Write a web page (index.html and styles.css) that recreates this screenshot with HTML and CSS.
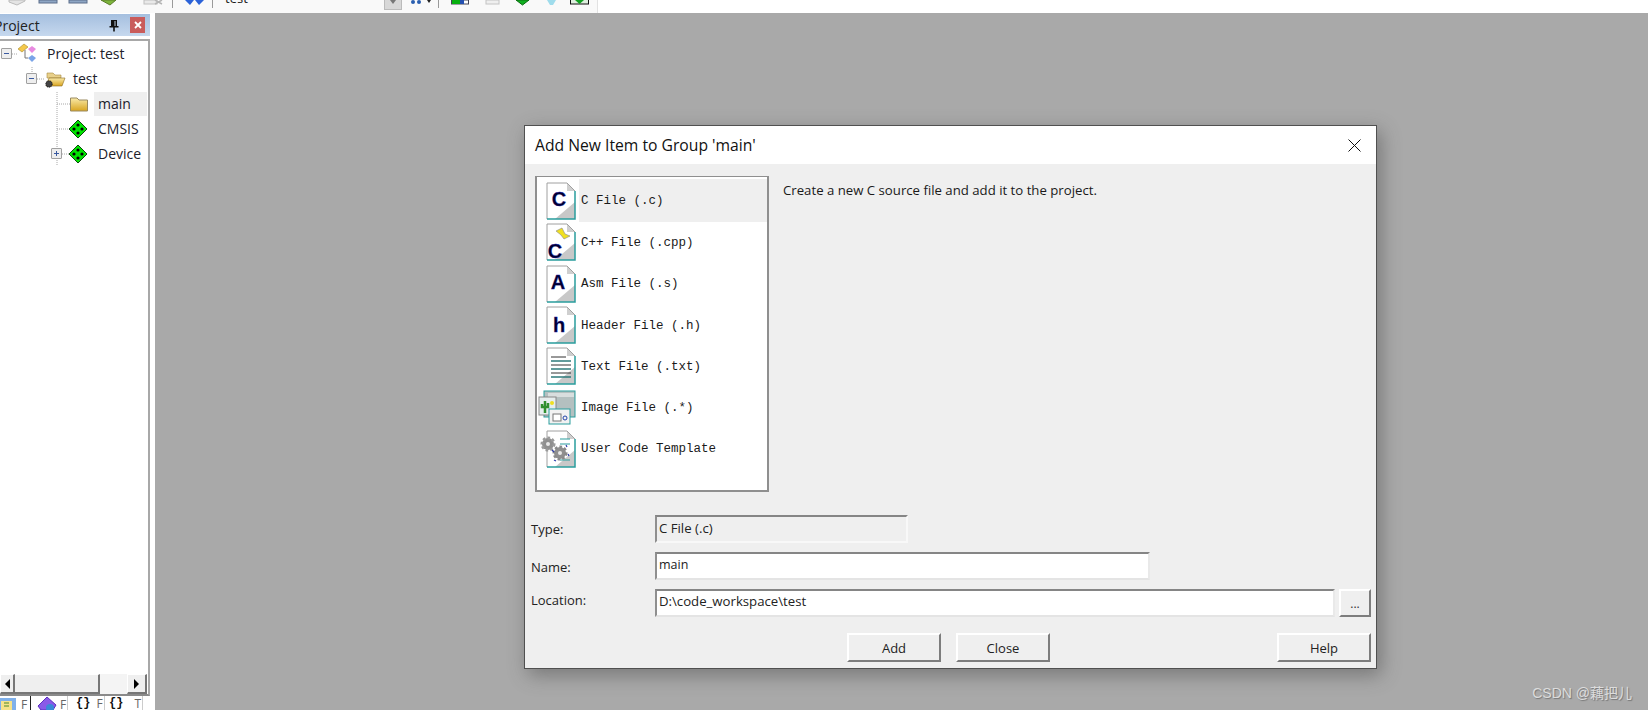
FILE: index.html
```html
<!DOCTYPE html>
<html lang="en">
<head>
<meta charset="utf-8">
<title>Add New Item to Group 'main'</title>
<link rel="stylesheet" href="styles.css">
</head>
<body>
<svg class="defs" width="0" height="0" aria-hidden="true">
  <defs>
    <linearGradient id="fold" x1="0" y1="0" x2="0" y2="1">
      <stop offset="0" stop-color="#f9e9a8"/><stop offset="1" stop-color="#d9a520"/>
    </linearGradient>
    <symbol id="doc" viewBox="0 0 30 38">
      <path d="M1 1H21L29 9V37H1Z" fill="#fff"/>
      <path d="M29 20V37H9Z" fill="#c8c8c8"/>
      <path d="M21 1V9H29Z" fill="#cfcfcf"/>
      <path d="M1 37V1H21L29 9" fill="none" stroke="#a0a0a0"/>
      <path d="M1 37H29V9" fill="none" stroke="#2a9d9d" stroke-width="1.5"/>
    </symbol>
    <symbol id="chip" viewBox="0 0 20 20">
      <path d="M10 1L19 10L10 19L1 10Z" fill="#00e400" stroke="#0a4a0a"/>
      <circle cx="10" cy="6" r="1.6" fill="#000"/><circle cx="10" cy="14" r="1.6" fill="#000"/>
      <circle cx="6" cy="10" r="1.6" fill="#000"/><circle cx="14" cy="10" r="1.6" fill="#000"/>
    </symbol>
  </defs>
</svg>

<header class="topbar">
  <div class="tools">
    <svg class="tool-a" width="172" height="13" viewBox="0 0 172 13">
      <path d="M9 2L17 5L25 1V0H9Z" fill="#e4e4e4" stroke="#bbb"/>
      <rect x="39" y="0" width="18" height="3" fill="#8ea6c4" stroke="#5d6f8c"/>
      <rect x="69" y="0" width="18" height="3" fill="#8ea6c4" stroke="#5d6f8c"/>
      <path d="M101 0H116L110 5Z" fill="#7db53c" stroke="#5a7d2a"/>
      <rect x="144" y="0" width="13" height="4" fill="#e9e9e9" stroke="#c0c0c0"/>
      <path d="M155 0L162 4M162 0L155 4" stroke="#b5b5b5" stroke-width="1.5"/>
    </svg>
    <span class="tsep"></span>
    <svg class="tool-b" width="20" height="13" viewBox="0 0 20 13">
      <path d="M0 0H9L5 5ZM10 0H19L14 5Z" fill="#2b62d8"/>
    </svg>
    <span class="tsep tsep-b"></span>
    <span class="combo">test</span>
    <span class="drop"></span>
    <svg class="tool-c" width="21" height="13" viewBox="0 0 21 13">
      <circle cx="3" cy="2" r="2" fill="#2a5fb0"/><circle cx="9" cy="2" r="2" fill="#2a5fb0"/>
      <path d="M17 0H21L19 3Z" fill="#222"/>
    </svg>
    <span class="tsep tsep-c"></span>
    <svg class="tool-d" width="139" height="13" viewBox="0 0 139 13">
      <rect x="0.5" y="0" width="17" height="4" fill="#fff" stroke="#445"/>
      <rect x="1" y="0" width="8" height="4" fill="#08b010"/><rect x="9" y="0" width="4" height="4" fill="#2450b0"/>
      <rect x="35" y="0" width="13" height="4" fill="#efefef" stroke="#c4c4c4"/>
      <path d="M65 0H78L71.500 5Z" fill="#10b020" stroke="#0a6a10"/>
      <path d="M96 0H105L102 5H99Z" fill="#9fdcec"/>
      <rect x="119.500" y="-1" width="18" height="5" fill="#dff0df" stroke="#111"/>
      <path d="M124 0H133L128.500 4Z" fill="#10a020"/>
    </svg>
  </div>
</header>

<div class="main">
  <aside class="panel">
    <div class="panel-head">
      <span class="panel-title">Project</span>
      <svg class="pin" width="10" height="13" viewBox="0 0 10 13">
        <path d="M2 1H8V7H9.500V8.500H5.800V12.500H4.200V8.500H.5V7H2Z" fill="#111"/>
        <rect x="5.500" y="2" width="1" height="5" fill="#bcd"/>
      </svg>
      <span class="panel-close">
        <svg width="8" height="8" viewBox="0 0 8 8"><path d="M1 1L7 7M7 1L1 7" stroke="#fff" stroke-width="1.800"/></svg>
      </span>
    </div>
    <div class="tree-frame">
      <div class="tree">
        <svg class="tree-lines" width="100" height="140" viewBox="0 0 100 140">
          <path d="M12 13H18M32 26V34M37 38H44M57 51V125M57 63H70M57 88H70M62 113H70" stroke="#a8a8a8" stroke-dasharray="1 1" fill="none"/>
        </svg>
        <div class="row r0">
          <span class="exp"><i></i></span>
          <svg class="ti" width="21" height="21" viewBox="0 0 21 21">
            <path d="M1 6L7 1L11 4L5 9Z" fill="#f4c84a" stroke="#a88a2a" stroke-width=".6"/>
            <path d="M15 3L19 6L15 10L11 6Z" fill="#e88ae0"/>
            <path d="M15 12L19 15L15 19L11 15Z" fill="#7aa4e8"/>
            <path d="M8 7V15H11" fill="none" stroke="#777"/>
          </svg>
          <span class="lbl">Project: test</span>
        </div>
        <div class="row r1">
          <span class="exp"><i></i></span>
          <svg class="ti" width="22" height="20" viewBox="0 0 22 20">
            <path d="M3 4H9L11 6H17V9H3Z" fill="#e8d08a" stroke="#a88a40" stroke-width=".6"/>
            <path d="M2 17L5 9H21L18 17Z" fill="url(#fold)" stroke="#8a6a20" stroke-width=".6"/>
            <circle cx="5" cy="15" r="3.200" fill="#444" stroke="#111" stroke-dasharray="1 1"/>
          </svg>
          <span class="lbl">test</span>
        </div>
        <div class="row r2">
          <svg class="ti" width="18" height="16" viewBox="0 0 18 16">
            <path d="M0.500 2H7L9 4H17.500V15H0.500Z" fill="url(#fold)" stroke="#9a8a60"/>
          </svg>
          <span class="lbl sel">main</span>
        </div>
        <div class="row r3">
          <svg class="ti" width="20" height="20"><use href="#chip"/></svg>
          <span class="lbl">CMSIS</span>
        </div>
        <div class="row r4">
          <span class="exp plus"><i></i></span>
          <svg class="ti" width="20" height="20"><use href="#chip"/></svg>
          <span class="lbl">Device</span>
        </div>
      </div>
      <div class="hscroll">
        <span class="sb-btn sb-left"><b class="arr-l"></b></span>
        <span class="sb-thumb"></span>
        <span class="sb-track"></span>
        <span class="sb-btn sb-right"><b class="arr-r"></b></span>
      </div>
    </div>
    <nav class="tabs">
      <span class="tab t-files">
        <svg width="20" height="14" viewBox="0 0 20 14"><rect x="0" y="1" width="16" height="13" fill="#7fb0ea"/><rect x="1" y="4" width="11" height="10" fill="#f5e28a"/><path d="M4 6H9M4 9H9" stroke="#4a8a2a"/></svg>
        <em>F</em>
      </span>
      <span class="tab t-active">
        <svg width="21" height="14" viewBox="0 0 21 14"><path d="M2 10L11 1L20 9L17 14H5Z" fill="#8a5ae8" stroke="#5a2ec0"/><circle cx="14" cy="12" r="4" fill="#3a8ad8"/></svg>
        <em>F</em>
      </span>
      <span class="tab t-b"><strong>{}</strong><em>F</em></span>
      <span class="tab t-c"><strong>{}</strong><em>T</em></span>
    </nav>
  </aside>

  <main class="workspace">
    <section class="dialog">
      <div class="dlg-title">
        <h1>Add New Item to Group 'main'</h1>
        <svg class="dlg-x" width="13" height="13" viewBox="0 0 13 13"><path d="M.5 .5L12.500 12.500M12.500 .5L.5 12.500" stroke="#111" fill="none"/></svg>
      </div>
      <div class="dlg-body">
        <div class="top-row">
          <ul class="file-list">
            <li class="item current">
              <svg class="fi" width="30" height="38"><use href="#doc"/><text x="13" y="24" class="ltr">C</text></svg>
              <span>C File (.c)</span>
            </li>
            <li class="item">
              <svg class="fi" width="30" height="38"><use href="#doc"/>
                <path d="M10 8L16 5L19 11L24 13L18 16L15 12Z" fill="#f0e020" stroke="#888" stroke-width=".6"/>
                <text x="9" y="35" class="ltr">C</text></svg>
              <span>C++ File (.cpp)</span>
            </li>
            <li class="item">
              <svg class="fi" width="30" height="38"><use href="#doc"/><text x="12" y="24" class="ltr">A</text></svg>
              <span>Asm File (.s)</span>
            </li>
            <li class="item">
              <svg class="fi" width="30" height="38"><use href="#doc"/><text x="13" y="26" class="ltr">h</text></svg>
              <span>Header File (.h)</span>
            </li>
            <li class="item">
              <svg class="fi" width="30" height="38"><use href="#doc"/>
                <path d="M5 10H20M5 14H25M5 18H25M5 22H25M5 26H25M5 30H25" stroke="#333" stroke-width="1"/>
                <path d="M5 14H25M5 22H25M5 30H25" stroke="#2a9d9d" stroke-width="1"/>
              </svg>
              <span>Text File (.txt)</span>
            </li>
            <li class="item">
              <svg class="fi fi-wide" width="38" height="36" viewBox="0 0 38 36">
                <rect x="6" y="1" width="31" height="26" fill="#b4c0c0" stroke="#2a9d9d"/>
                <rect x="10" y="3" width="26" height="4" fill="#d8dede"/>
                <rect x="1" y="7" width="17" height="18" fill="#e6eeee" stroke="#888"/>
                <path d="M7 11V23M4 14V17H10V13" stroke="#2f8f2f" stroke-width="2.500" fill="none"/>
                <circle cx="14" cy="13" r="2" fill="#f0e020"/>
                <rect x="11" y="19" width="21" height="15" fill="#f2f2f2" stroke="#2a9d9d"/>
                <rect x="15" y="24" width="8" height="7" fill="#fff" stroke="#777"/>
                <circle cx="27" cy="28" r="2" fill="none" stroke="#2244aa"/>
              </svg>
              <span>Image File (.*)</span>
            </li>
            <li class="item">
              <svg class="fi" width="38" height="38" viewBox="0 0 38 38">
                <g transform="translate(8 0)"><use href="#doc" width="30" height="38"/>
                <path d="M14 9H24M14 14H24M14 30H24" stroke="#2a9d9d"/></g>
                <circle cx="10" cy="14" r="6" fill="#8f8f8f" stroke="#9a9a9a" stroke-width="3" stroke-dasharray="2.500 2"/>
                <circle cx="10" cy="14" r="2" fill="#e8e8e8"/>
                <circle cx="22" cy="23" r="6" fill="#8f8f8f" stroke="#8a8a8a" stroke-width="3" stroke-dasharray="2.500 2"/>
                <circle cx="22" cy="23" r="2" fill="#e8e8e8"/>
                <path d="M14 20L16 22M28 15L29 17M30 24L31 26M16 30L18 31" stroke="#2a3aa8" stroke-width="1.200"/>
              </svg>
              <span>User Code Template</span>
            </li>
          </ul>
          <p class="desc">Create a new C source file and add it to the project.</p>
        </div>
        <div class="form">
          <div class="field f-type">
            <label>Type:</label>
            <div class="box ro">C File (.c)</div>
          </div>
          <div class="field f-name">
            <label>Name:</label>
            <div class="box name">main</div>
          </div>
          <div class="field f-loc">
            <label>Location:</label>
            <div class="box loc">D:\code_workspace\test</div>
            <button class="btn dots" type="button">...</button>
          </div>
        </div>
        <div class="actions">
          <button class="btn act" type="button">Add</button>
          <button class="btn act" type="button">Close</button>
          <button class="btn act help" type="button">Help</button>
        </div>
      </div>
    </section>
    <div class="watermark">CSDN @藕把儿</div>
  </main>
</div>
</body>
</html>
```
FILE: styles.css
```css
* { box-sizing: border-box; }
html, body { margin: 0; height: 710px; overflow: hidden; background: #fff; }
body { display: flex; flex-direction: column; font-family: "Open Sans", "Noto Sans", sans-serif; color: #1a1a1a; }
.defs { position: absolute; }

/* top toolbar */
.topbar { height: 13px; flex: none; background: #fff; overflow: hidden; }
.tools { width: 598px; height: 13px; display: flex; align-items: flex-start; background: #f9f9f9; border-right: 1px solid #e2e2e2; }
.tools svg { flex: none; display: block; }
.tsep { flex: none; width: 1px; height: 8px; background: #9a9a9a; }
.tool-b { margin-left: 12px; }
.tsep-b { margin-left: 7px; }
.combo { width: 171px; padding-left: 12px; font: 13px/13px "Open Sans", sans-serif; margin-top: -8px; height: 13px; }
.drop { flex: none; width: 18px; height: 10px; position: relative; background: #d8d8d8; border: 1px solid #bbb; border-top: 0; }
.drop::after { content: ""; position: absolute; left: 5px; top: 0; border: 3px solid transparent; border-top: 4px solid #777; border-bottom: 0; }
.tool-c { margin-left: 8px; }
.tsep-c { margin-left: 7px; }
.tool-d { margin-left: 12px; }

.main { flex: 1; display: flex; min-height: 0; }

/* project panel */
.panel { width: 155px; flex: none; display: flex; flex-direction: column; background: #fff; overflow: hidden; }
.panel-head { margin-top: 1px; height: 22px; width: 150px; flex: none; display: flex; align-items: center; background: linear-gradient(#a5bfdf, #c6d8ee); overflow: hidden; }
.panel-title { font-size: 14px; margin-left: -6px; color: #222; flex: 1; }
.pin { margin-right: 11px; }
.panel-close { width: 15px; height: 16px; margin-right: 5px; background: #c95c5c; display: flex; align-items: center; justify-content: center; }
.tree-frame { margin-top: 3px; width: 150px; height: 657px; flex: none; display: flex; flex-direction: column; border-top: 2px solid #a8a8a8; border-right: 2px solid #a8a8a8; border-bottom: 2px solid #8a8a8a; }
.tree { position: relative; flex: 1; }
.tree-lines { position: absolute; left: 0; top: 0; }
.row { height: 25px; display: flex; align-items: center; position: relative; font-size: 14px; }
.lbl { color: #20202a; }
.r0 { padding-left: 1px; }
.r0 .ti { margin-left: 5px; }
.r0 .lbl { margin-left: 9px; }
.r1 { padding-left: 26px; }
.r1 .ti { margin-left: 7px; margin-top: 1px; }
.r1 .lbl { margin-left: 7px; }
.r2 { padding-left: 70px; }
.r2 .lbl.sel { margin-left: 6px; width: 53px; height: 24px; padding-left: 4px; line-height: 24px; background: #efefef; }
.r3 { padding-left: 68px; }
.r3 .lbl { margin-left: 10px; }
.r4 { padding-left: 51px; }
.r4 .ti { margin-left: 6px; }
.r4 .lbl { margin-left: 10px; }
.exp { width: 11px; height: 11px; flex: none; position: relative; background: #eee; border: 1px solid #a0a0a0; border-radius: 1px; }
.exp i { position: absolute; left: 2px; top: 4px; width: 5px; height: 1px; background: #3a5aa0; }
.plus::after { content: ""; position: absolute; left: 4px; top: 2px; width: 1px; height: 5px; background: #3a5aa0; }

.hscroll { height: 20px; flex: none; display: flex; margin-right: 1px; }
.sb-btn { width: 20px; flex: none; background: #efefef; border: 1px solid #fff; border-right: 2px solid #777; border-bottom: 2px solid #777; display: flex; align-items: center; justify-content: center; }
.sb-left { width: 15px; }
.sb-thumb { width: 85px; flex: none; background: #efefef; border-top: 1px solid #fff; border-right: 2px solid #777; border-bottom: 2px solid #777; }
.sb-track { flex: 1; background: #f4f4f4; }
.arr-l { width: 0; height: 0; border: 5px solid transparent; border-right: 5px solid #000; border-left: 0; }
.arr-r { width: 0; height: 0; border: 5px solid transparent; border-left: 5px solid #000; border-right: 0; }

.tabs { height: 15px; flex: none; display: flex; font-size: 12px; line-height: 15px; overflow: hidden; }
.tab { display: flex; align-items: flex-start; flex: none; height: 15px; }
.tab em { font-style: normal; color: #666; }
.tab strong { font: bold 12px/15px "Liberation Mono", monospace; color: #111; }
.t-files { width: 30px; padding-top: 1px; gap: 1px; }
.t-active { width: 38px; padding-left: 5px; gap: 3px; border-left: 1px solid #222; border-right: 1px solid #ccc; }
.t-active em { line-height: 17px; }
.t-b { width: 37px; padding-left: 8px; gap: 6px; border-right: 1px solid #ccc; }
.t-c { width: 38px; padding-left: 4px; gap: 11px; border-right: 1px solid #ccc; }

/* workspace */
.workspace { position: relative; flex: 1; background: #a9a9a9; }
.dialog { position: absolute; left: 369px; top: 112px; width: 853px; height: 544px; display: flex; flex-direction: column; background: #efefef; border: 1px solid #505050; box-shadow: 4px 6px 18px rgba(60,60,60,.45); }
.dlg-title { height: 38px; flex: none; display: flex; align-items: center; justify-content: space-between; padding: 0 15px 0 10px; background: #fff; }
.dlg-title h1 { margin: 0; font-size: 15.700px; font-weight: 400; color: #111; }
.dlg-body { flex: 1; display: flex; flex-direction: column; padding: 12px 5px 0 6px; }
.top-row { display: flex; height: 316px; flex: none; padding-left: 4px; }
.file-list { list-style: none; margin: 0; padding: 2px 0 0; width: 234px; flex: none; background: #fff; border: 2px solid #8f8f8f; border-width: 1px 2px 2px 2px; }
.item { height: 41.300px; display: flex; align-items: center; position: relative; padding-left: 42px; font: 12.500px "Liberation Mono", monospace; color: #1a1a1a; white-space: pre; }
.item:first-child { height: 43.300px; padding-top: 0; }
.item span { padding-left: 2px; flex: 1; height: 100%; display: flex; align-items: center; }
.item.current span { background: #efefef; }
.fi { position: absolute; left: 9px; top: 1px; }
.item:first-child .fi { top: 3px; }
.item:nth-child(7) .fi { left: 1px; }
.fi-wide { left: 1px; top: 3px; }
.ltr { font: bold 20px "Liberation Sans", sans-serif; fill: #000030; stroke: #1c1cb0; stroke-width: .3px; text-anchor: middle; }
.desc { margin: 5px 0 0 14px; font-size: 13.200px; color: #1a1a1a; }

.form { margin-top: 23px; display: flex; flex-direction: column; }
.field { display: flex; align-items: center; height: 28px; flex: none; font-size: 13px; }
.f-name { margin-top: 9px; }
.f-loc { margin-top: 9px; }
.field label { width: 124px; flex: none; color: #222; }
.f-name label { padding-top: 2px; }
.f-loc label { padding-bottom: 6px; padding-top: 0; }
.box { height: 28px; padding: 2px 0 0 2px; line-height: 18px; border-style: solid; border-width: 2px; border-color: #858585 #e9e9e9 #e4e4e4 #8f8f8f; background: #fff; color: #222; font-size: 12.500px; }
.box.ro { width: 253px; background: #efefef; border-color: #858585 #f8f8f8 #f8f8f8 #8f8f8f; font-size: 13.200px; }
.box.name { width: 495px; }
.box.loc { flex: 1; font-size: 13.200px; padding-top: 1px; }
.btn { display: block; padding: 0; background: #efefef; font-family: inherit; color: #222; border-style: solid; border-width: 2px; border-color: #fff #7d7d7d #7d7d7d #fff; }
.dots { width: 32px; height: 28px; margin-left: 4px; font-size: 12px; color: #333; }
.actions { margin-top: 16px; display: flex; gap: 15px; padding-left: 316px; }
.act { width: 94px; height: 29px; font-size: 13px; }
.help { margin-left: auto; }

.watermark { position: absolute; right: 16px; bottom: 8px; font: 14px/18px "Liberation Sans", "Noto Sans CJK SC", sans-serif; color: #dcdcdc; text-shadow: 1px 1px 1px #777; }
```
